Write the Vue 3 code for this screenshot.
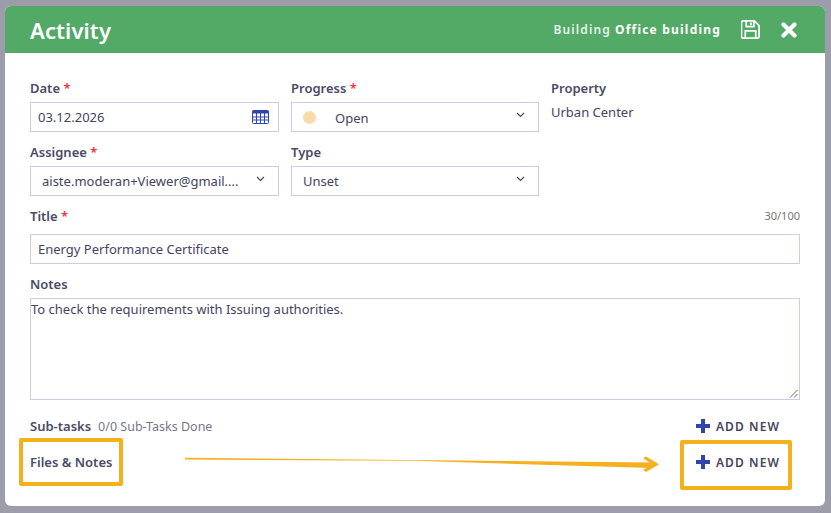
<script setup>
const chevron = "M1 1l3.500 3.500 3.500-3.500";
</script>

<template>
  <div class="page">
    <section class="modal">
      <header class="head">
        <h1>Activity</h1>
        <div class="head-right">
          <span class="building">Building <b>Office building</b></span>
          <svg class="save" width="19" height="19" viewBox="0 0 20 20" fill="none" stroke="#fff" stroke-width="1.800">
            <path d="M2.500 1h11.500l5 5v11.500a1.500 1.500 0 0 1-1.500 1.500h-15.500a1.500 1.500 0 0 1-1.500-1.500v-15a1.500 1.500 0 0 1 1.500-1.500z" />
            <path d="M5.500 1v6h8v-6M4.500 19v-7.500h11v7.500" />
            <path d="M10.500 2.500v3" />
          </svg>
          <svg class="close" width="16" height="16" viewBox="0 0 16 16">
            <path d="M2.500 2.500l11 11M13.500 2.500l-11 11" stroke="#fff" stroke-width="4.200" stroke-linecap="round" />
          </svg>
        </div>
      </header>

      <div class="body">
        <div class="grid">
          <div class="field">
            <label>Date <i>*</i></label>
            <div class="input date">
              <span>03.12.2026</span>
              <svg width="17" height="14" viewBox="0 0 17 14" fill="none" stroke="#2f45ad" stroke-width="1">
                <rect x="0.500" y="0.500" width="16" height="13" rx="1" />
                <path d="M0.500 2h16" stroke-width="3" />
                <path d="M0.500 7h16M0.500 10h16M4.500 3v10M8.500 3v10M12.500 3v10" />
              </svg>
            </div>
          </div>
          <div class="field">
            <label>Progress <i>*</i></label>
            <div class="input select progress">
              <span class="dot"></span>
              <span class="open">Open</span>
              <svg class="chev" width="9" height="6" viewBox="0 0 9 6"><path :d="chevron" /></svg>
            </div>
          </div>
          <div class="field">
            <label>Property</label>
            <div class="plain">Urban Center</div>
          </div>
          <div class="field">
            <label>Assignee <i>*</i></label>
            <div class="input select">
              <span>aiste.moderan+Viewer@gmail....</span>
              <svg class="chev" width="9" height="6" viewBox="0 0 9 6"><path :d="chevron" /></svg>
            </div>
          </div>
          <div class="field">
            <label>Type</label>
            <div class="input select">
              <span>Unset</span>
              <svg class="chev" width="9" height="6" viewBox="0 0 9 6"><path :d="chevron" /></svg>
            </div>
          </div>
        </div>

        <div class="field title">
          <div class="title-row">
            <label>Title <i>*</i></label>
            <small>30/100</small>
          </div>
          <div class="input">Energy Performance Certificate</div>
        </div>

        <div class="field notes">
          <label>Notes</label>
          <div class="textarea">
            To check the requirements with Issuing authorities.
            <svg class="grip" width="9" height="9" viewBox="0 0 9 9" stroke="#666" stroke-width="1">
              <path d="M1 8.500l7.500-7.500M5 8.500l3.500-3.500" />
            </svg>
          </div>
        </div>

        <div class="row subtasks">
          <div>
            <label>Sub-tasks</label>
            <span class="count">0/0 Sub-Tasks Done</span>
          </div>
          <button class="add">
            <svg width="14" height="14" viewBox="0 0 14 14"><path d="M7 0v14M0 7h14" stroke="#2f45ad" stroke-width="4" /></svg>
            ADD NEW
          </button>
        </div>
        <div class="row files">
          <label>Files &amp; Notes</label>
          <button class="add">
            <svg width="14" height="14" viewBox="0 0 14 14"><path d="M7 0v14M0 7h14" stroke="#2f45ad" stroke-width="4" /></svg>
            ADD NEW
          </button>
        </div>
      </div>
    </section>

    <!-- screenshot annotations on top of the dialog -->
    <div class="mark mark-left"></div>
    <div class="mark mark-right"></div>
    <svg class="arrow" width="480" height="20" viewBox="0 0 480 20">
      <path d="M1 1.800L1 3.500L230 4.800L468 12L468 6.500z" fill="#f5b01e" />
      <path d="M459 2L462 0.500L475 8.300L462 16L459 14L466 9.500L466 7z" fill="#f5b01e" />
    </svg>
  </div>
</template>

<style scoped>
.page {
  position: relative;
  width: 831px;
  height: 513px;
  padding: 6px 6px 7px 5px;
  box-sizing: border-box;
  background: #9c9cab;
  font-family: "Noto Sans", sans-serif;
  color: #44445f;
  font-size: 13px;
  overflow: hidden;
}
.modal {
  height: 500px;
  background: #fff;
  border-radius: 6px;
  overflow: hidden;
}
.head {
  height: 47px;
  background: #53a966;
  color: #fff;
  display: flex;
  align-items: center;
  justify-content: space-between;
  padding: 0 28px 0 25px;
}
h1 {
  margin: 0;
  font-size: 22px;
  font-weight: 600;
  letter-spacing: 0.1px;
}
.head-right {
  display: flex;
  align-items: center;
}
.building {
  font-size: 12px;
  font-weight: 600;
  letter-spacing: 1.100px;
  color: #e6f3e9;
  margin-right: 20px;
}
.building b {
  font-weight: 700;
  letter-spacing: 1.200px;
  color: #fff;
}
.close {
  margin-left: 21px;
}
.body {
  padding: 26px 25px 0;
}
.grid {
  display: grid;
  grid-template-columns: 249px 248px 249px;
  column-gap: 12px;
  row-gap: 11px;
}
label {
  display: block;
  font-size: 13px;
  font-weight: 600;
  line-height: 18px;
  height: 18px;
  color: #4a4a66;
}
label i {
  color: #f0323c;
  font-style: normal;
}
.field > label {
  margin-bottom: 5px;
}
.input {
  height: 30px;
  box-sizing: border-box;
  border: 1px solid #c8cde8;
  display: flex;
  align-items: center;
  justify-content: space-between;
  padding: 0 7px;
  line-height: 28px;
}
.date {
  padding-right: 9px;
}
.select {
  padding: 0 13px 0 11px;
}
.progress {
  justify-content: flex-start;
}
.dot {
  width: 13px;
  height: 13px;
  border-radius: 50%;
  background: #f4dcab;
  margin-right: 19px;
}
.open {
  padding-top: 1px;
}
.chev {
  fill: none;
  stroke: #44445f;
  stroke-width: 1.100;
  margin-top: -4px;
}
.progress .chev {
  margin-left: auto;
}
.plain {
  line-height: 18px;
  padding-top: 1px;
}
.title {
  margin-top: 11px;
}
.title-row {
  display: flex;
  justify-content: space-between;
  height: 18px;
  margin-bottom: 9px;
}
.title-row small {
  font-size: 11px;
  color: #777;
  line-height: 18px;
}
.notes {
  margin-top: 11px;
}
.textarea {
  position: relative;
  height: 102px;
  box-sizing: border-box;
  border: 1px solid #c8cde8;
  line-height: 20px;
  padding: 0;
}
.grip {
  position: absolute;
  right: 1px;
  bottom: 1px;
}
.row {
  display: flex;
  align-items: center;
  justify-content: space-between;
}
.row label {
  display: inline-block;
}
.subtasks {
  margin-top: 17px;
  height: 18px;
}
.count {
  font-size: 12.500px;
  color: #77778a;
  margin-left: 7px;
}
.files {
  margin-top: 18px;
  height: 18px;
}
.add {
  display: flex;
  align-items: center;
  gap: 6px;
  border: 0;
  background: none;
  padding: 0;
  margin-right: 20px;
  font-family: inherit;
  font-size: 12px;
  font-weight: 600;
  letter-spacing: 1.100px;
  color: #44445f;
}
.mark {
  position: absolute;
  box-sizing: border-box;
  border: 4px solid #f5b01e;
  border-radius: 2px;
}
.mark-left {
  left: 19px;
  top: 438px;
  width: 104px;
  height: 48px;
}
.mark-right {
  left: 680px;
  top: 440px;
  width: 112px;
  height: 50px;
}
.arrow {
  position: absolute;
  left: 184px;
  top: 456px;
}
</style>

<style>
html, body {
  margin: 0;
  overflow: hidden;
}
</style>
